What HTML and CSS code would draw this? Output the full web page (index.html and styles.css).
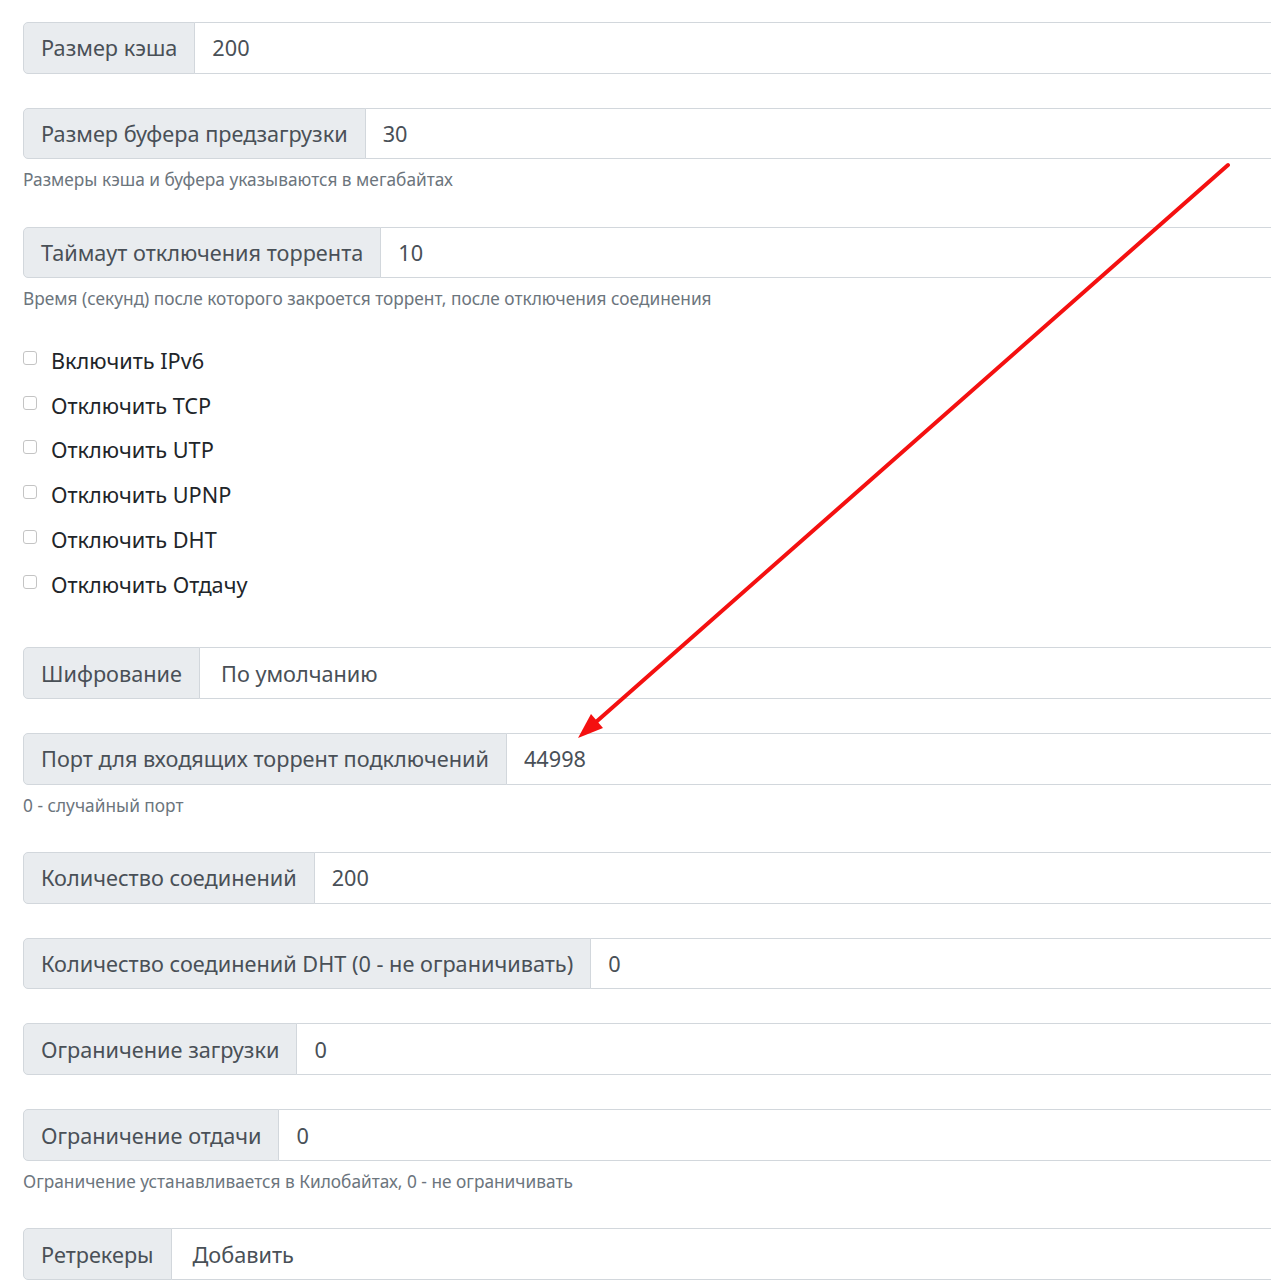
FILE: index.html
```html
<!DOCTYPE html>
<html lang="ru">
<head>
  <meta charset="UTF-8" />
  <meta name="viewport" content="width=device-width, initial-scale=1.0" />
  <title>Настройки</title>
  <link rel="stylesheet" href="styles.css">
</head>
<body>
  <div class="settings">
    <div class="field">
      <div class="input-group">
        <span class="input-label">Размер кэша</span>
        <input type="text" class="form-control" value="200">
      </div>
    </div>

    <div class="field">
      <div class="input-group">
        <span class="input-label">Размер буфера предзагрузки</span>
        <input type="text" class="form-control" value="30">
      </div>
      <small class="form-text">Размеры кэша и буфера указываются в мегабайтах</small>
    </div>

    <div class="field">
      <div class="input-group">
        <span class="input-label">Таймаут отключения торрента</span>
        <input type="text" class="form-control" value="10">
      </div>
      <small class="form-text">Время (секунд) после которого закроется торрент, после отключения соединения</small>
    </div>

    <div class="checks">
      <label class="form-check"><input type="checkbox"><span>Включить IPv6</span></label>
      <label class="form-check"><input type="checkbox"><span>Отключить TCP</span></label>
      <label class="form-check"><input type="checkbox"><span>Отключить UTP</span></label>
      <label class="form-check"><input type="checkbox"><span>Отключить UPNP</span></label>
      <label class="form-check"><input type="checkbox"><span>Отключить DHT</span></label>
      <label class="form-check"><input type="checkbox"><span>Отключить Отдачу</span></label>
    </div>

    <div class="field">
      <div class="input-group">
        <span class="input-label">Шифрование</span>
        <div class="form-control select">По умолчанию</div>
      </div>
    </div>

    <div class="field">
      <div class="input-group">
        <span class="input-label">Порт для входящих торрент подключений</span>
        <input type="text" class="form-control" value="44998">
      </div>
      <small class="form-text">0 - случайный порт</small>
    </div>

    <div class="field">
      <div class="input-group">
        <span class="input-label">Количество соединений</span>
        <input type="text" class="form-control" value="200">
      </div>
    </div>

    <div class="field">
      <div class="input-group">
        <span class="input-label">Количество соединений DHT (0 - не ограничивать)</span>
        <input type="text" class="form-control" value="0">
      </div>
    </div>

    <div class="field">
      <div class="input-group">
        <span class="input-label">Ограничение загрузки</span>
        <input type="text" class="form-control" value="0">
      </div>
    </div>

    <div class="field">
      <div class="input-group">
        <span class="input-label">Ограничение отдачи</span>
        <input type="text" class="form-control" value="0">
      </div>
      <small class="form-text">Ограничение устанавливается в Килобайтах, 0 - не ограничивать</small>
    </div>

    <div class="field">
      <div class="input-group">
        <span class="input-label">Ретрекеры</span>
        <div class="form-control select">Добавить</div>
      </div>
    </div>
  </div>

  <svg class="annotation" width="1271" height="1280" viewBox="0 0 1271 1280">
    <line x1="1228" y1="165" x2="596" y2="722" stroke="#f41010" stroke-width="4" stroke-linecap="round" />
    <polygon points="578,738 591,714 603,728" fill="#f41010" />
  </svg>
</body>
</html>
```

FILE: styles.css
```css
* {
  margin: 0;
  padding: 0;
  box-sizing: border-box;
}

html, body {
  overflow: hidden;
}

body {
  background: #fff;
  font-family: 'Noto Sans', 'Open Sans', sans-serif;
  font-size: 21.7px;
  color: #212529;
  position: relative;
  height: 1280px;
}

.settings {
  padding: 22px 0 0 23px;
  margin-right: -40px;
}

.field {
  margin-bottom: 34px;
}

.input-group {
  display: flex;
  height: 51.7px;
}

.input-label {
  display: flex;
  align-items: center;
  padding: 0 17px;
  background: #e9ecef;
  border: 1px solid #d2d7dc;
  border-radius: 5px 0 0 5px;
  color: #495057;
  white-space: nowrap;
}

.form-control {
  flex: 1;
  min-width: 0;
  margin-left: -1px;
  padding: 0 17px;
  border: 1px solid #d2d7dc;
  border-radius: 0 5px 5px 0;
  background: #fff;
  font-family: inherit;
  font-size: 21.7px;
  color: #495057;
  outline: none;
}

.form-control.select {
  display: flex;
  align-items: center;
  padding-left: 21px;
}

.form-text {
  display: block;
  margin-top: 7.8px;
  font-size: 17.3px;
  line-height: 25.6px;
  color: #6c757d;
}

.checks {
  display: flex;
  flex-direction: column;
  gap: 14.8px;
  margin-top: 1px;
  margin-bottom: 47.5px;
}

.form-check {
  display: flex;
  align-items: flex-start;
  gap: 14px;
  height: 30px;
  line-height: 30px;
}

.form-check input {
  appearance: none;
  -webkit-appearance: none;
  width: 14px;
  height: 14px;
  margin-top: 5px;
  flex-shrink: 0;
  border: 1px solid #c4c4c4;
  border-radius: 3px;
  background: #fff;
}

.annotation {
  position: absolute;
  top: 0;
  left: 0;
  pointer-events: none;
}
```
